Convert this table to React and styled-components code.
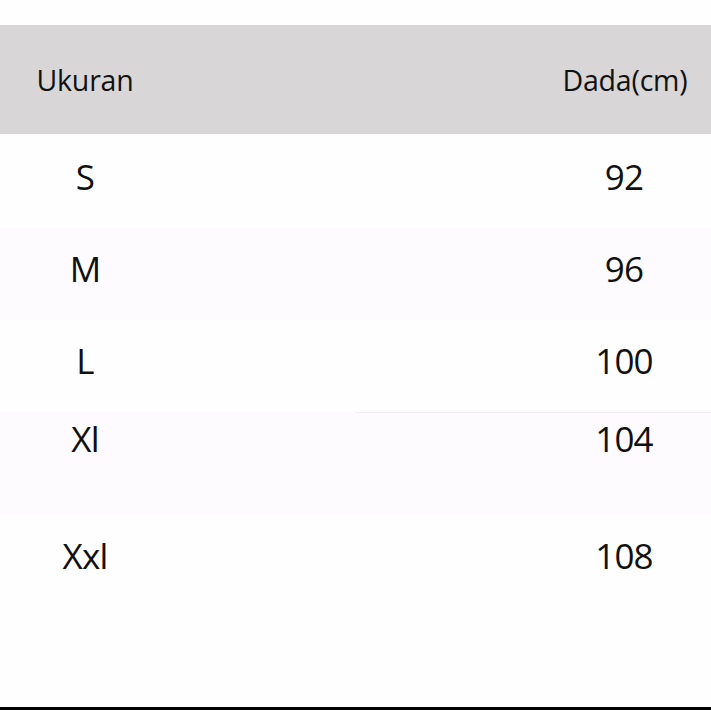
import React from "react";
import styled, { createGlobalStyle } from "styled-components";

const Global = createGlobalStyle`
  html, body { margin: 0; padding: 0; background: #ffffff; }
  body { font-family: "Open Sans", "Noto Sans", sans-serif; color: #111111; }
`;

const Page = styled.div`
  width: 711px;
  height: 710px;
  box-sizing: border-box;
  padding-top: 25px;
  display: flex;
  flex-direction: column;
  background: #fefefe;
  border-bottom: 3px solid #000;
  overflow: hidden;
`;

const HeaderRow = styled.div`
  height: 109px;
  background: #d8d6d7;
  display: grid;
  grid-template-columns: 170px 1fr 172px;
  align-items: center;
  font-size: 28.5px;
  letter-spacing: -0.2px;
`;

const Row = styled.div`
  height: ${(p) => p.$h}px;
  box-sizing: border-box;
  padding-top: ${(p) => p.$pt}px;
  background: ${(p) => (p.$tint ? "#fdfbfd" : "#fefefe")};
  display: grid;
  grid-template-columns: 170px 1fr 174px;
  align-items: start;
  font-size: 35px;
  line-height: 40px;
  letter-spacing: -0.8px;
  position: relative;
  ${(p) =>
    p.$split
      ? `&::before { content: ""; position: absolute; top: 0; left: 355px; right: 0; height: 1px; background: #f1eff1; }`
      : ""}
`;

const Cell = styled.div`
  grid-column: ${(p) => (p.$right ? 3 : 1)};
  text-align: center;
  white-space: nowrap;
`;

const Fill = styled.div`
  flex: 1;
`;

const rows = [
  { size: "S", chest: "92", h: 94, pt: 23 },
  { size: "M", chest: "96", h: 92, pt: 21, tint: true },
  { size: "L", chest: "100", h: 92, pt: 21 },
  { size: "Xl", chest: "104", h: 103, pt: 7, tint: true, split: true },
  { size: "Xxl", chest: "108", h: 85, pt: 21 },
];

export default function App() {
  return (
    <>
      <Global />
      <Page>
        <HeaderRow>
          <Cell>Ukuran</Cell>
          <Cell $right>Dada(cm)</Cell>
        </HeaderRow>
        {rows.map((r) => (
          <Row key={r.size} $h={r.h} $pt={r.pt} $tint={r.tint} $split={r.split}>
            <Cell>{r.size}</Cell>
            <Cell $right>{r.chest}</Cell>
          </Row>
        ))}
        <Fill />
      </Page>
    </>
  );
}
